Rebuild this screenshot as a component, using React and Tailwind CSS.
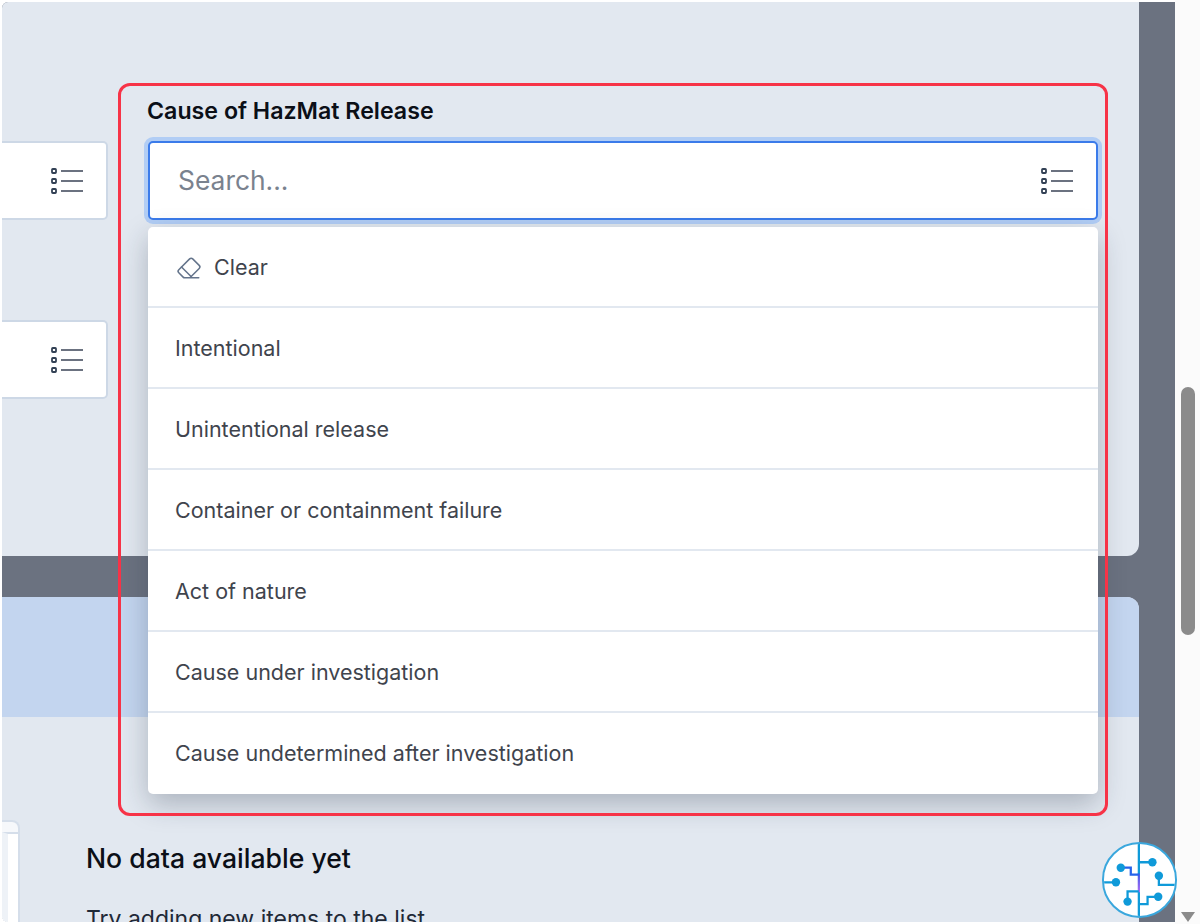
import React from 'react';
import { Eraser } from 'lucide-react';

const options = [
  'Intentional',
  'Unintentional release',
  'Container or containment failure',
  'Act of nature',
  'Cause under investigation',
  'Cause undetermined after investigation',
];

const ListIcon = () => (
  <svg width="32" height="28" viewBox="0 0 32 28" fill="none" className="shrink-0">
    <rect x="1" y="2" width="4" height="4" rx="0.8" stroke="#334155" strokeWidth="1.8" />
    <rect x="1" y="12" width="4" height="4" rx="0.8" stroke="#334155" strokeWidth="1.8" />
    <rect x="1" y="22" width="4" height="4" rx="0.8" stroke="#334155" strokeWidth="1.8" />
    <path d="M10 4h22M10 14h22M10 24h22" stroke="#6b7280" strokeWidth="2" />
  </svg>
);

const SideField = () => (
  <div className="h-[79px] flex items-center justify-end pr-[23px] bg-white border-2 border-l-0 border-[#cdd8e6] rounded-r-[5px]">
    <ListIcon />
  </div>
);

const BrainLogo = () => (
  <div className="absolute left-[1102px] top-[842px] w-[75px] h-[76px] rounded-full bg-white border-2 border-[#3aa7dd] overflow-hidden">
    <svg viewBox="160 190 220 220" className="w-full h-full" fill="none" stroke="#0f9ad9" strokeWidth="7">
      <defs>
        <linearGradient id="mid" x1="0" y1="0" x2="0" y2="1">
          <stop offset="0" stopColor="#3b5be8" />
          <stop offset="1" stopColor="#b06cf5" />
        </linearGradient>
      </defs>
      <path d="M268 185V283M268 335V415" />
      <rect x="264.5" y="280" width="7" height="58" fill="url(#mid)" stroke="none" />
      <path d="M268 245H310" />
      <path d="M330 287V315H385" />
      <path d="M328 352H295V375H268" />
      <path d="M212 262H243V283H268" stroke="#2563eb" />
      <path d="M150 307H197" />
      <path d="M233 367V335H268" />
      <g fill="#0f9ad9" stroke="none">
        <circle cx="310" cy="245" r="13" />
        <circle cx="330" cy="287" r="13" />
        <circle cx="328" cy="352" r="13" />
        <circle cx="212" cy="262" r="13" />
        <circle cx="197" cy="307" r="13" />
        <circle cx="233" cy="367" r="13" />
      </g>
    </svg>
  </div>
);

const App = () => {
  return (
    <div className="relative w-[1200px] h-[924px] overflow-hidden bg-white flex font-['Inter',sans-serif] text-[#111827]">
      <div className="w-[1175px] h-full pl-[2px] pt-[2px] pb-[2px] bg-white">
        <div className="h-full bg-[#6b7280] flex flex-col gap-[41px] pr-[36px] rounded-tl-[6px] rounded-bl-[6px] overflow-hidden">
          {/* top card */}
          <div className="h-[554px] shrink-0 bg-[#e2e8f0] rounded-br-[12px] flex pt-[139px] gap-[40px]">
            <div className="w-[106px] shrink-0 flex flex-col gap-[100px]">
              <SideField />
              <SideField />
            </div>
            <div className="w-[950px] shrink-0">
              <div className="h-[79px] flex items-center justify-between pl-[28px] pr-[23px] bg-white border-2 border-[#3b7bea] rounded-[5px] shadow-[0_0_0_4px_#b1cdf5]">
                <span className="text-[26.4px] pt-[1px] text-[#7a828e]">Search...</span>
                <ListIcon />
              </div>
            </div>
          </div>

          {/* bottom card */}
          <div className="flex-1 bg-[#e2e8f0] rounded-tr-[12px] overflow-hidden">
            <div className="h-[120px] bg-[#c3d5ef]" />
            <div className="flex pt-[103px] gap-[66px]">
              <div className="w-[18px] h-[120px] shrink-0 bg-[#f6f8fb] border-2 border-l-0 border-[#d5deea] rounded-tr-[8px] overflow-hidden">
                <div className="h-full mt-[10px] bg-white border-t-2 border-[#d5deea] border-l-[6px] border-l-[#eef2f7]" />
              </div>
              <div className="pt-[20px]">
                <h2 className="text-[26.6px] leading-[36px] font-medium text-[#0b0f17]">No data available yet</h2>
                <p className="mt-[28px] text-[23px] leading-[30px] text-[#1f2937]">Try adding new items to the list</p>
              </div>
            </div>
          </div>
        </div>
      </div>

      {/* scrollbar */}
      <div className="relative w-[25px] h-full bg-[#fbfbfb] pt-[387px] pl-[6px]">
        <div className="w-[14px] h-[248px] bg-[#8b8b8b] rounded-full" />
        <div className="absolute left-[6px] top-[912px] w-0 h-0 border-x-[7px] border-x-transparent border-t-[10px] border-t-[#8b8b8b]" />
      </div>

      {/* annotation outline */}
      <div className="absolute left-[118px] top-[83px] w-[990px] h-[733px] border-[3px] border-[#f73347] rounded-[12px] pointer-events-none z-20" />

      <div className="absolute left-[147px] top-[96px] text-[23.2px] leading-[30px] font-semibold text-[#0b0f17] z-10">
        Cause of HazMat Release
      </div>

      {/* dropdown */}
      <div className="absolute left-[148px] top-[227px] w-[950px] bg-white rounded-[5px] shadow-[0_10px_28px_rgba(30,41,59,0.28)] z-10 text-[21.5px] text-[#3f444d]">
        <div className="h-[81px] flex items-center gap-[12px] pl-[28px] pt-[2px] border-b-2 border-[#e2e8f0]">
          <Eraser size={26} strokeWidth={1.4} className="text-[#64748b]" />
          <span>Clear</span>
        </div>
        {options.map((o, i) => (
          <div
            key={o}
            className={i < options.length - 1 ? 'h-[81px] flex items-center pl-[27px] pt-[2px] border-b-2 border-[#e2e8f0]' : 'h-[81px] flex items-center pl-[27px]'}
          >
            {o}
          </div>
        ))}
      </div>

      <BrainLogo />
    </div>
  );
};

export default App;
